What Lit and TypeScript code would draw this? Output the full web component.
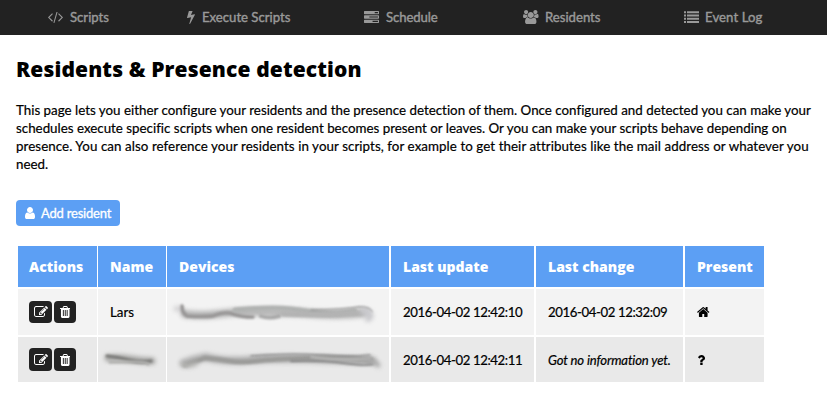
import { LitElement, html, css, svg } from "lit";
import { customElement, property } from "lit/decorators.js";

interface Glyph {
  box: string;
  d: string;
}

const GLYPHS: Record<string, Glyph> = {
  code: {
    box: "-19 301 1830 1344",
    d: "M553 1399l-50 50q-10 10-23 10t-23-10l-466-466q-10-10-10-23t10-23l466-466q10-10 23-10t23 10l50 50q10 10 10 23t-10 23l-393 393 393 393q10 10 10 23t-10 23zm591-1067l-373 1291q-4 13-15.5 19.5t-23.5 2.5l-62-17q-13-4-19.5-15.5t-2.5-24.5l373-1291q4-13 15.5-19.5t23.5-2.5l62 17q13 4 19.5 15.5t2.5 24.5zm657 651l-466 466q-10 10-23 10t-23-10l-50-50q-10-10-10-23t10-23l393-393-393-393q-10-10-10-23t10-23l50-50q10-10 23-10t23 10l466 466q10 10 10 23t-10 23z",
  },
  bolt: {
    box: "448 0 900 1792",
    d: "M1333 566q18 20 7 44l-540 1157q-13 25-42 25-4 0-14-2-17-5-25.5-19t-4.5-30l197-808-406 101q-4 1-12 1-18 0-31-11-18-15-13-39l201-825q4-14 16-23t28-9h328q19 0 32 12.5t13 29.5q0 8-5 18l-171 463 396-98q8-2 12-2 19 0 34 15z",
  },
  tasks: {
    box: "0 128 1792 1408",
    d: "M1024 1408h640v-128h-640v128zm-384-512h1024v-128h-1024v128zm640-512h384v-128h-384v128zm512 832v256q0 26-19 45t-45 19h-1664q-26 0-45-19t-19-45v-256q0-26 19-45t45-19h1664q26 0 45 19t19 45zm0-512v256q0 26-19 45t-45 19h-1664q-26 0-45-19t-19-45v-256q0-26 19-45t45-19h1664q26 0 45 19t19 45zm0-512v256q0 26-19 45t-45 19h-1664q-26 0-45-19t-19-45v-256q0-26 19-45t45-19h1664q26 0 45 19t19 45z",
  },
  users: {
    box: "-64 0 1920 1792",
    d: "M529 896q-162 5-265 128h-134q-82 0-138-40.5t-56-118.5q0-353 124-353 6 0 43.5 21t97.5 42.5 119 21.5q67 0 133-23-5 37-5 66 0 159 93 283zm1071 637q0 120-73 189.5t-194 69.5h-874q-121 0-194-69.5t-73-189.5q0-53 3.5-103.5t14-109 26.5-108.5 43-97.5 62-81 85.5-53.5 111.5-20q10 0 43 21.5t73 48 107 48 135 21.5 135-21.5 107-48 73-48 43-21.5q61 0 111.5 20t85.5 53.5 62 81 43 97.5 26.5 108.5 14 109 3.5 103.5zm-1024-1277q0 106-75 181t-181 75-181-75-75-181 75-181 181-75 181 75 75 181zm704 384q0 159-112.5 271.5t-271.5 112.5-271.5-112.5-112.5-271.5 112.5-271.5 271.5-112.5 271.5 112.5 112.5 271.5zm576 225q0 78-56 118.5t-138 40.5h-134q-103-123-265-128 93-124 93-283 0-29-5-66 66 23 133 23 59 0 119-21.5t97.5-42.5 43.5-21q124 0 124 353zm-128-609q0 106-75 181t-181 75-181-75-75-181 75-181 181-75 181 75 75 181z",
  },
  list: {
    box: "0 0 15 12",
    d: "M0 .3h2v2H0zM3 .3h12v2H3zM0 3.5h2v2H0zM3 3.5h12v2H3zM0 6.7h2v2H0zM3 6.7h12v2H3zM0 9.9h2v2H0zM3 9.9h12v2H3z",
  },
  user: {
    box: "256 128 1280 1536",
    d: "M1536 1399q0 109-62.5 187t-150.5 78h-854q-88 0-150.5-78t-62.5-187q0-85 8.5-160.5t31.5-152 58.5-131 94-89 134.5-34.5q131 128 313 128t313-128q76 0 134.5 34.5t94 89 58.5 131 31.5 152 8.5 160.5zm-256-887q0 159-112.5 271.5t-271.5 112.5-271.5-112.5-112.5-271.5 112.5-271.5 271.5-112.5 271.5 112.5 112.5 271.5z",
  },
  edit: {
    box: "0 130 1792 1534",
    d: "M888 1184l116-116-152-152-116 116v56h96v96h56zm440-720q-16-16-33 1l-350 350q-17 17-1 33t33-1l350-350q17-17 1-33zm80 594v190q0 119-84.5 203.5t-203.5 84.5h-832q-119 0-203.5-84.5t-84.5-203.5v-832q0-119 84.5-203.5t203.5-84.5h832q63 0 117 25 15 7 18 23 3 17-9 29l-49 49q-14 14-32 8-23-6-45-6h-832q-66 0-113 47t-47 113v832q0 66 47 113t113 47h832q66 0 113-47t47-113v-126q0-13 9-22l64-64q15-15 35-7t20 29zm-96-738l288 288-672 672h-288v-288zm444 132l-92 92-288-288 92-92q28-28 68-28t68 28l152 152q28 28 28 68t-28 68z",
  },
  trash: {
    box: "192 128 1408 1536",
    d: "M704 1376v-704q0-14-9-23t-23-9h-64q-14 0-23 9t-9 23v704q0 14 9 23t23 9h64q14 0 23-9t9-23zm256 0v-704q0-14-9-23t-23-9h-64q-14 0-23 9t-9 23v704q0 14 9 23t23 9h64q14 0 23-9t9-23zm256 0v-704q0-14-9-23t-23-9h-64q-14 0-23 9t-9 23v704q0 14 9 23t23 9h64q14 0 23-9t9-23zm-544-992h448l-48-117q-7-9-17-11h-317q-10 2-17 11zm928 32v64q0 14-9 23t-23 9h-96v948q0 83-47 143.5t-113 60.5h-832q-66 0-113-58.5t-47-141.5v-952h-96q-14 0-23-9t-9-23v-64q0-14 9-23t23-9h309l70-167q15-37 54-63t79-26h320q40 0 79 26t54 63l70 167h309q14 0 23 9t9 23z",
  },
  home: {
    box: "64 253 1664 1283",
    d: "M1472 992v480q0 26-19 45t-45 19h-384v-384h-256v384h-384q-26 0-45-19t-19-45v-480q0-1 .5-3t.5-3l575-474 575 474q1 2 1 6zm223-69l-62 74q-8 9-21 11h-3q-13 0-21-7l-692-577-692 577q-12 8-24 7-13-2-21-11l-62-74q-8-10-7-23.5t11-21.5l719-599q32-26 76-26t76 26l244 204v-195q0-14 9-23t23-9h192q14 0 23 9t9 23v408l219 182q10 8 11 21.5t-7 23.5z",
  },
  question: {
    box: "470 256 934 1280",
    d: "M1088 1256v240q0 16-12 28t-28 12h-240q-16 0-28-12t-12-28v-240q0-16 12-28t28-12h240q16 0 28 12t12 28zm316-600q0 54-15.5 101t-35 76.5-55 59.5-57.5 43.5-61 35.5q-41 23-68.5 65t-27.5 67q0 17-12 32.5t-28 15.5h-240q-15 0-25.5-18.5t-10.5-37.5v-45q0-83 65-156.5t143-108.5q59-27 84-56t25-76q0-42-46.5-74t-107.5-32q-65 0-108 29-35 25-107 115-13 16-31 16-12 0-25-8l-164-125q-13-10-15.5-25t5.5-28q160-266 464-266 80 0 161 31t146 83 106 127.5 41 158.5z",
  },
};

@customElement("glyph-icon")
class GlyphIcon extends LitElement {
  @property() name = "code";

  static styles = css`
    :host { display: inline-flex; flex: none; }
    svg { width: 100%; height: 100%; fill: currentColor; display: block; }
    path { stroke: none; }
  `;

  render() {
    const g = GLYPHS[this.name];
    return html`<svg viewBox=${g.box} preserveAspectRatio="none"><path d=${g.d}></path></svg>`;
  }
}

interface Stroke {
  d: string;
  w: number;
  c: string;
  soft?: boolean;
}

/* Smudged-out values; coordinates are relative to the table cell. */
const SMUDGES: Record<string, Stroke[]> = {
  name: [
    { d: "M10 21 Q20 20 32 22 T54 24", w: 7, c: "#a6a6a4", soft: true },
    { d: "M9 19 Q20 20 31 23 T53 24", w: 3, c: "#7b7b79" },
    { d: "M12 25 Q26 25 38 25 T50 27", w: 3, c: "#b0b0ae" },
  ],
  first: [
    { d: "M9 19 Q13 17 16 22", w: 5, c: "#d2d1d3", soft: true },
    { d: "M18 24 Q35 26 50 24 T80 22 T110 22 T150 24 T198 23", w: 8, c: "#b6b6b6", soft: true },
    { d: "M15 16 Q15 23 20 26 Q36 27 46 26 Q58 21 66 24 T86 27", w: 3.5, c: "#979595" },
    { d: "M68 20 Q88 18 106 18 T144 22 T188 21", w: 5, c: "#b0b2b1" },
    { d: "M94 26 Q102 29 112 26", w: 4, c: "#a9a9a9" },
    { d: "M116 24 Q150 26 194 23", w: 5, c: "#b3b3b3" },
    { d: "M144 20 Q172 20 192 17 Q203 17 205 22", w: 1.3, c: "#969696" },
    { d: "M196 21 Q208 24 201 29", w: 6, c: "#c9c9cd", soft: true },
  ],
  second: [
    { d: "M17 26 Q28 22 39 20 Q56 25 82 23 T140 22 T205 24", w: 8, c: "#b0b0b0", soft: true },
    { d: "M18 28 Q27 25 38 21 Q50 22 62 24 T90 24 T140 21 T204 23", w: 4.5, c: "#9b9b99" },
    { d: "M15 27 Q20 31 29 27", w: 4, c: "#bbbbb8", soft: true },
    { d: "M84 19 Q120 16 156 18 T203 18", w: 1.4, c: "#888" },
    { d: "M124 24 Q155 23 176 26 T206 27", w: 1.8, c: "#858585" },
    { d: "M144 20 Q165 23 203 22", w: 1.4, c: "#c4c4c4" },
    { d: "M198 21 Q206 23 211 28", w: 5, c: "#ababab", soft: true },
  ],
};

@customElement("smudge-mark")
class SmudgeMark extends LitElement {
  @property() kind = "name";

  static styles = css`
    :host { display: block; }
    svg { display: block; width: 100%; height: 45px; }
    path { fill: none; stroke-linecap: round; stroke-linejoin: round; filter: blur(0.9px); }
    path.soft { filter: blur(1.9px); }
  `;

  render() {
    return html`<svg>
      ${SMUDGES[this.kind].map(
        (s) => svg`<path class=${s.soft ? "soft" : "firm"} d=${s.d} stroke=${s.c} stroke-width=${s.w}></path>`
      )}
    </svg>`;
  }
}

const NAV = [
  { icon: "code", label: "Scripts" },
  { icon: "bolt", label: "Execute Scripts" },
  { icon: "tasks", label: "Schedule" },
  { icon: "users", label: "Residents" },
  { icon: "list", label: "Event Log" },
];

const HEADERS = ["Actions", "Name", "Devices", "Last update", "Last change", "Present"];

const ROWS = [
  { name: "Lars", devices: "first", update: "2016-04-02 12:42:10", change: "2016-04-02 12:32:09", present: true },
  { name: "", devices: "second", update: "2016-04-02 12:42:11", change: "", present: false },
];

@customElement("app-root")
class AppRoot extends LitElement {
  static styles = css`
    :host {
      display: block;
      height: 407px;
      overflow: hidden;
      background: #fff;
      color: #000;
      font: 400 13.35px/18px Lato, "Open Sans", sans-serif;
      font-variant-ligatures: none;
      -webkit-text-stroke: 0.2px currentColor;
    }
    nav {
      display: grid;
      grid-template-columns: 139px 177px 159px 161px 1fr;
      height: 35px;
      box-sizing: border-box;
      padding: 0 0 1px 48px;
      background: #222;
      color: #999;
      -webkit-text-stroke: 0.4px currentColor;
    }
    .tab { display: flex; align-items: center; font-size: 13.15px; }
    .tab .label { white-space: nowrap; }
    .icon-code { width: 15px; height: 11px; margin-right: 7px; }
    .icon-bolt { width: 8px; height: 14px; margin-right: 7px; }
    .icon-tasks { width: 15px; height: 12px; margin-right: 7px; }
    .icon-users { width: 15.5px; height: 14px; margin-right: 6.5px; }
    .icon-list { width: 15px; height: 12px; margin-right: 6px; }
    .label-tasks { letter-spacing: -0.1px; }
    .label-list { letter-spacing: 0.1px; }
    main { padding: 0 0 0 16px; }
    h1 {
      margin: 0;
      padding-top: 19px;
      font: 800 21px/31px "Open Sans", "Noto Sans", sans-serif;
      letter-spacing: 0.13px;
      -webkit-text-stroke: 0;
    }
    p { margin: 16px 0 0; }
    .line { display: block; white-space: nowrap; }
    .tight { letter-spacing: 0.065px; }
    .add {
      display: flex;
      align-items: center;
      width: 104px;
      height: 26px;
      margin: 27px 0 20px;
      padding: 0 0 0 9px;
      border: 0;
      border-radius: 4px;
      background: #5c9ff4;
      color: #fff;
      font: inherit;
      font-size: 13px;
      letter-spacing: -0.2px;
      white-space: nowrap;
      -webkit-text-stroke: 0.3px currentColor;
    }
    .icon-user { width: 10px; height: 12px; margin-right: 6px; }
    .table { padding-left: 2px; display: grid; gap: 2px; }
    .row { display: grid; grid-template-columns: 80px 69px 224px 145px 149px 79px; grid-template-rows: 100%; }
    .head { height: 41px; color: #fff; font: 800 14px/41px "Open Sans", "Noto Sans", sans-serif; -webkit-text-stroke: 0; }
    .odd { height: 46px; }
    .even { height: 45px; }
    .cell {
      display: flex;
      align-items: center;
      box-sizing: border-box;
      margin-right: 2px;
      padding-left: 12px;
      background: #f3f3f3;
      white-space: nowrap;
    }
    .cell:nth-child(1) { margin-right: 1px; padding-left: 11px; gap: 2px; }
    .cell:nth-child(2) { margin-right: 1px; }
    .cell:nth-child(6) { margin-right: 0; }
    .head .cell { background: #5c9ff4; }
    .even .cell { background: #e9e9e9; }
    .stamp { letter-spacing: -0.4px; font-size: 13.2px; }
    .none { font-style: italic; font-size: 13.1px; letter-spacing: -0.16px; }
    .row .smudged { padding: 0; }
    .smudged smudge-mark { width: 100%; height: 45px; }
    .act {
      display: flex;
      align-items: center;
      justify-content: center;
      width: 22px;
      height: 22px;
      padding: 0;
      border: 0;
      border-radius: 4px;
      background: #222;
      color: #fff;
    }
    .act:first-child { width: 23px; }
    .even .act { height: 23px; }
    .icon-edit { width: 14px; height: 12px; }
    .icon-trash { width: 10.5px; height: 12px; }
    .icon-home { width: 12.5px; height: 10px; }
    .icon-question { width: 7px; height: 10px; margin-left: 1px; }
  `;

  icon(name: string) {
    return html`<glyph-icon class="icon-${name}" name=${name}></glyph-icon>`;
  }

  render() {
    return html`
      <nav>
        ${NAV.map(
          (n) => html`<a class="tab">${this.icon(n.icon)}<span class="label label-${n.icon}">${n.label}</span></a>`
        )}
      </nav>
      <main>
        <h1>Residents &amp; Presence detection</h1>
        <p>
          <span class="line">This page lets you either configure your residents and the presence detection of them. Once configured and detected you can make your</span>
          <span class="line">schedules execute specific scripts when one resident becomes present or leaves. Or you can make your scripts behave depending on</span>
          <span class="line tight">presence. You can also reference your residents in your scripts, for example to get their attributes like the mail address or whatever you</span>
          <span class="line">need.</span>
        </p>
        <button class="add">${this.icon("user")}Add resident</button>
        <div class="table">
          <div class="row head">${HEADERS.map((h) => html`<div class="cell">${h}</div>`)}</div>
          ${ROWS.map(
            (r, i) => html`<div class="row ${i % 2 ? "even" : "odd"}">
              <div class="cell">
                <button class="act">${this.icon("edit")}</button>
                <button class="act">${this.icon("trash")}</button>
              </div>
              ${r.name
                ? html`<div class="cell">${r.name}</div>`
                : html`<div class="cell smudged"><smudge-mark kind="name"></smudge-mark></div>`}
              <div class="cell smudged"><smudge-mark kind=${r.devices}></smudge-mark></div>
              <div class="cell"><span class="stamp">${r.update}</span></div>
              <div class="cell">
                ${r.change
                  ? html`<span class="stamp">${r.change}</span>`
                  : html`<span class="none">Got no information yet.</span>`}
              </div>
              <div class="cell">${this.icon(r.present ? "home" : "question")}</div>
            </div>`
          )}
        </div>
      </main>
    `;
  }
}
